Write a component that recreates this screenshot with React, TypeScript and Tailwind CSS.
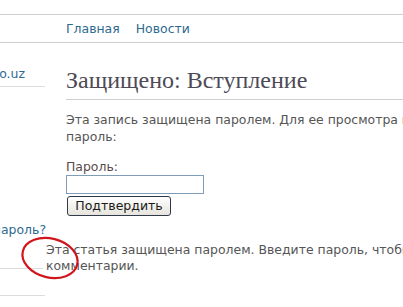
import React from 'react'

export default function App() {
  return (
    <div className="relative w-[403px] h-[307px] overflow-hidden bg-white font-['DejaVu_Sans',Verdana,sans-serif] text-[12.45px] text-[#555]">
      <div className="w-[620px]">
        {/* Верхняя полоса */}
        <div className="h-[15px] border-b border-[#cfcfcf]" />

        {/* Навигация */}
        <nav className="h-[28px] border-b border-[#cfcfcf] flex items-center pl-[66px] gap-[16px] text-[#2d6a8f]">
          <a className="leading-[16px]">Главная</a>
          <a className="leading-[16px]">Новости</a>
        </nav>

        <div className="flex">
          {/* Сайдбар (обрезан слева) */}
          <aside className="w-[46px] shrink-0 overflow-hidden">
            <div className="w-[45px] pt-[23px] pb-[4px] border-b border-[#dcdcdc] flex justify-end pr-[20px] leading-[16px] whitespace-nowrap text-[#2d6a8f]">
              www.sayt-info.uz
            </div>
            <div className="mt-[135px] w-[43px] pb-[30px] border-b border-[#dcdcdc]">
              <div className="w-[46px] flex justify-end leading-[16px] whitespace-nowrap text-[#2d6a8f]">
                Забыли пароль?
              </div>
            </div>
            <div className="w-[45px] h-[27px] border-b border-[#dcdcdc]" />
          </aside>

          {/* Основная колонка */}
          <main className="w-[514px] shrink-0">
            <article className="pl-[20px]">
              <h2 className="mt-[23px] pb-[5px] border-b border-[#cfcfcf] font-['Liberation_Serif',serif] text-[24px] leading-[28px] text-[#4d4a55] whitespace-nowrap">
                Защищено: Вступление
              </h2>
              <p className="mt-[11px] leading-[17px]">
                Эта запись защищена паролем. Для ее просмотра введите, пожалуйста, пароль:
              </p>
              <form onSubmit={(e) => e.preventDefault()}>
                <label className="block mt-[13px] leading-[17px] text-[#5a4a4e]">Пароль:</label>
                <input
                  type="password"
                  className="block w-[138px] h-[19px] border border-[#7f9db9] bg-white outline-none"
                />
                <button
                  type="submit"
                  className="mt-[2px] ml-[1px] w-[104px] h-[20px] rounded-[3px] border border-[#2f3b4a] bg-gradient-to-b from-white to-[#e6e4dc] text-[#1a1a1a] text-[12.5px] leading-[16px]"
                >
                  Подтвердить
                </button>
              </form>
            </article>

            <p className="mt-[26px] leading-[16px]">
              Эта статья защищена паролем. Введите пароль, чтобы посмотреть комментарии.
            </p>
          </main>
        </div>
      </div>

      {/* Красный овал-пометка */}
      <svg className="absolute left-[19px] top-[235px]" width="64" height="46" viewBox="0 0 64 46">
        <ellipse
          cx="31"
          cy="23"
          rx="28"
          ry="19.5"
          transform="rotate(14 31 23)"
          fill="none"
          stroke="#d0161c"
          strokeWidth="2.2"
        />
      </svg>
    </div>
  )
}
